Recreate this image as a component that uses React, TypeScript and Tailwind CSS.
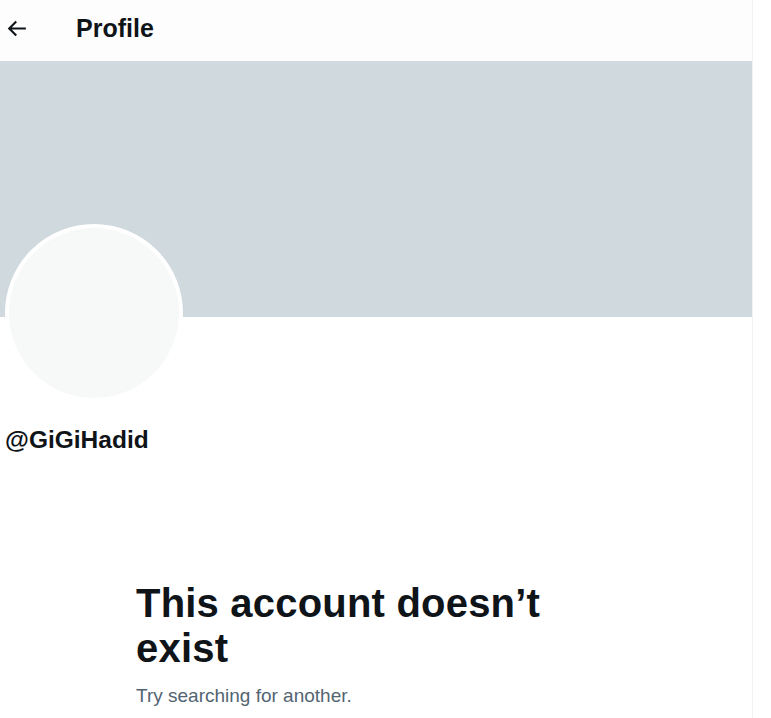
export default function App() {
  return (
    <div
      className="flex min-h-[718px] w-[771px] bg-white text-[#0f1419]"
      style={{ fontFamily: '"Liberation Sans", Arial, sans-serif' }}
    >
      <main className="w-[753px] border-r border-[#eff3f4] pb-10">
        {/* Header */}
        <header className="flex h-[61px] items-center bg-[#fdfdfd] pb-[5px] pl-1">
          <svg viewBox="0 0 24 24" className="h-[25px] w-[25px]" fill="#0f1419">
            <path d="M7.414 13l5.043 5.04-1.414 1.42L3.586 12l7.457-7.46 1.414 1.42L7.414 11H21v2H7.414z" />
          </svg>
          <h2 className="ml-[47px] text-[25px] font-bold leading-[30px]">Profile</h2>
        </header>

        {/* Banner */}
        <div className="h-[256px] bg-[#cfd9de]" />

        {/* Avatar */}
        <div className="pl-[5px]">
          <div className="relative -mt-[93px] h-[178px] w-[178px] rounded-full border-4 border-white bg-[#f7f9f9]" />
        </div>

        {/* Handle */}
        <div className="mt-[23px] pl-[5px] text-[24.5px] font-bold leading-[30px]">@GiGiHadid</div>

        {/* Empty state */}
        <div className="mt-[126px] max-w-[580px] pl-[136px]">
          <h1 className="max-w-[430px] text-[40px] font-extrabold leading-[45px] tracking-[0.2px]">
            This account doesn’t exist
          </h1>
          <p className="mt-3 text-[19px] leading-[25px] text-[#536471]">Try searching for another.</p>
        </div>
      </main>
      <div className="flex-1 bg-white" />
    </div>
  );
}
